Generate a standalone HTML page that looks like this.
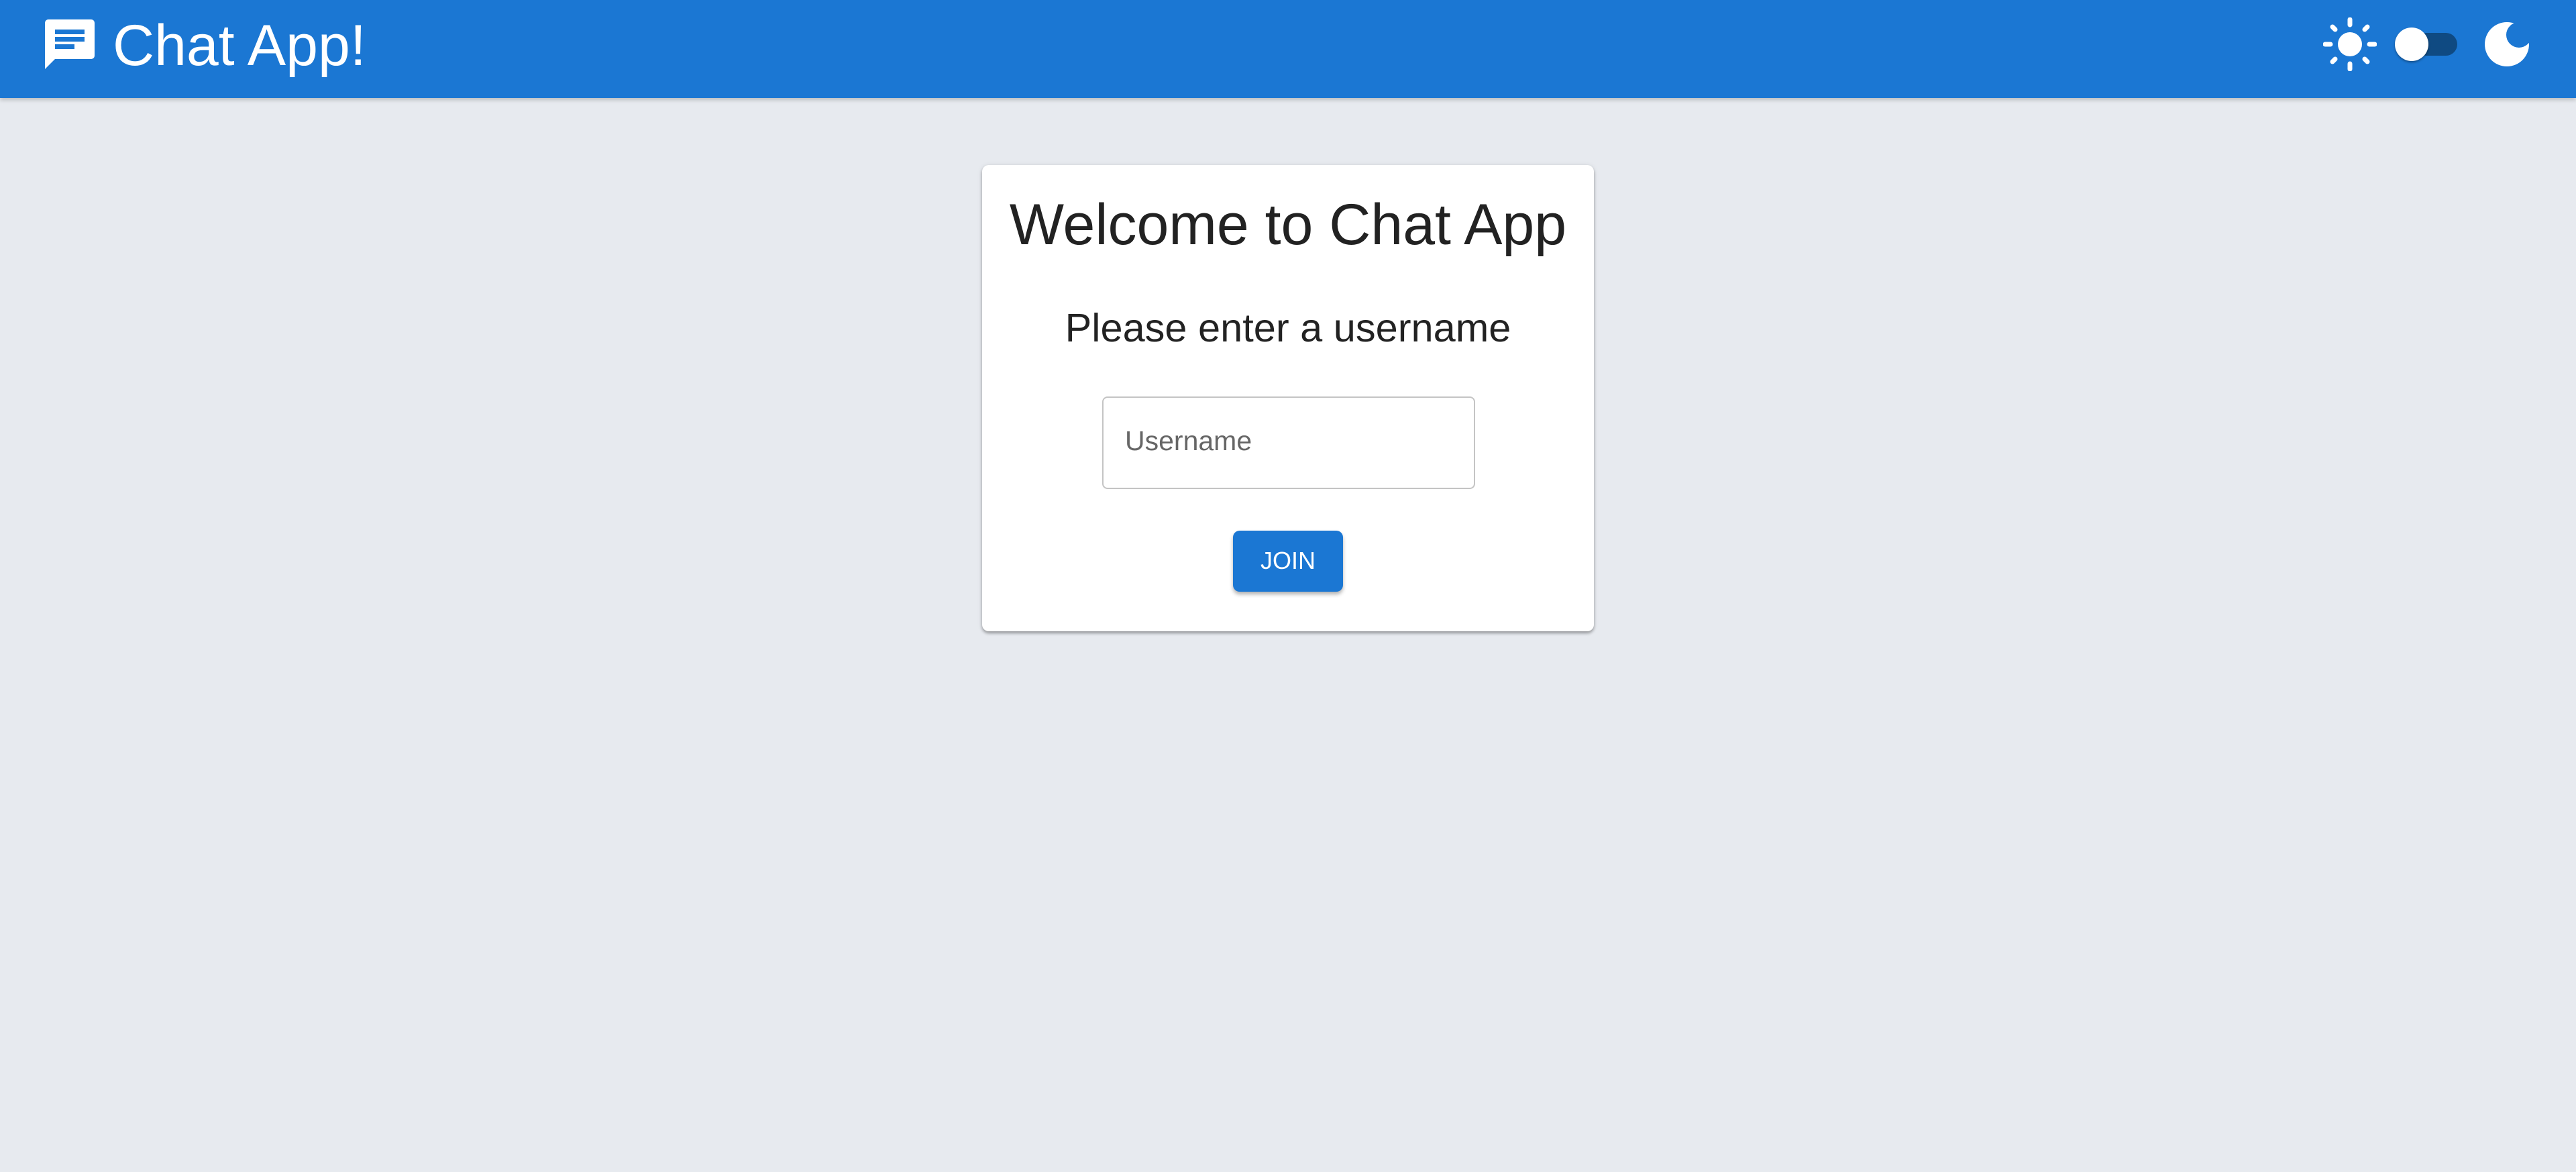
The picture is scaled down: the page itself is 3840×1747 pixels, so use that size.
<!DOCTYPE html>
<html><head><meta charset="utf-8"><style>
*{margin:0;padding:0;box-sizing:border-box}
body{width:3840px;height:1747px;background:#e7eaef;font-family:"Liberation Sans",Arial,sans-serif;position:relative;overflow:hidden}
.hdr{position:absolute;left:0;top:0;width:3840px;height:146px;background:#1b77d3;box-shadow:0 3px 6px rgba(0,0,0,.2)}
.t{position:absolute;white-space:nowrap;line-height:1}
.card{position:absolute;left:1464px;top:246px;width:912px;height:695px;background:#fff;border-radius:10px;box-shadow:0 3px 4px rgba(0,0,0,.3),0 1px 8px rgba(0,0,0,.1)}
.inp{position:absolute;left:1643px;top:591px;width:556px;height:138px;border:2px solid #c4c4c4;border-radius:8px}
.btn{position:absolute;left:1838px;top:791px;width:164px;height:91px;background:#1b77d3;border-radius:10px;box-shadow:0 4px 6px rgba(0,0,0,.3)}
</style></head><body>
<div class="hdr"></div>
<svg style="position:absolute;left:67px;top:29px" width="74" height="74" viewBox="0 0 74 74">
<path d="M5 0H69A5 5 0 0 1 74 5V54A5 5 0 0 1 69 59H15L0 74V5A5 5 0 0 1 5 0Z" fill="#fff"/>
<rect x="15" y="15" width="44" height="7" fill="#1b77d3"/>
<rect x="15" y="26" width="44" height="7" fill="#1b77d3"/>
<rect x="15" y="37" width="29" height="7" fill="#1b77d3"/>
</svg>
<div class="t" style="left:168px;top:25px;font-size:86px;color:#fff">Chat App!</div>
<svg style="position:absolute;left:3463px;top:26px" width="80" height="80" viewBox="0 0 80 80">
<circle cx="40" cy="40" r="18" fill="#fff"/>
<g stroke="#fff" stroke-width="7" stroke-linecap="round">
<line x1="40" y1="3" x2="40" y2="11"/><line x1="40" y1="69" x2="40" y2="77"/>
<line x1="3" y1="40" x2="11" y2="40"/><line x1="69" y1="40" x2="77" y2="40"/>
<line x1="14" y1="14" x2="18" y2="18"/><line x1="62" y1="62" x2="66" y2="66"/>
<line x1="14" y1="66" x2="18" y2="62"/><line x1="62" y1="18" x2="66" y2="14"/>
</g></svg>
<div style="position:absolute;left:3600px;top:49px;width:63px;height:34px;border-radius:17px;background:#0f4a82"></div>
<div style="position:absolute;left:3570px;top:41px;width:50px;height:50px;border-radius:50%;background:#fff;box-shadow:0 2px 3px rgba(0,0,0,.35)"></div>
<svg style="position:absolute;left:3704px;top:33px" width="66" height="66" viewBox="0 0 66 66">
<defs><mask id="m"><rect width="66" height="66" fill="#fff"/><circle cx="51" cy="19" r="19" fill="#000"/></mask></defs>
<circle cx="33" cy="33" r="33" fill="#fff" mask="url(#m)"/>
</svg>
<div class="card"></div>
<div class="t" style="left:1464px;width:912px;text-align:center;top:292px;font-size:86px;color:#222">Welcome to Chat App</div>
<div class="t" style="left:1464px;width:912px;text-align:center;top:459px;font-size:59.5px;color:#222">Please enter a username</div>
<div class="inp"></div>
<div class="t" style="left:1677px;top:637px;font-size:41px;color:#666">Username</div>
<div class="btn"></div>
<div class="t" style="left:1838px;width:164px;text-align:center;top:818px;font-size:36px;color:#fff">JOIN</div>
</body></html>
